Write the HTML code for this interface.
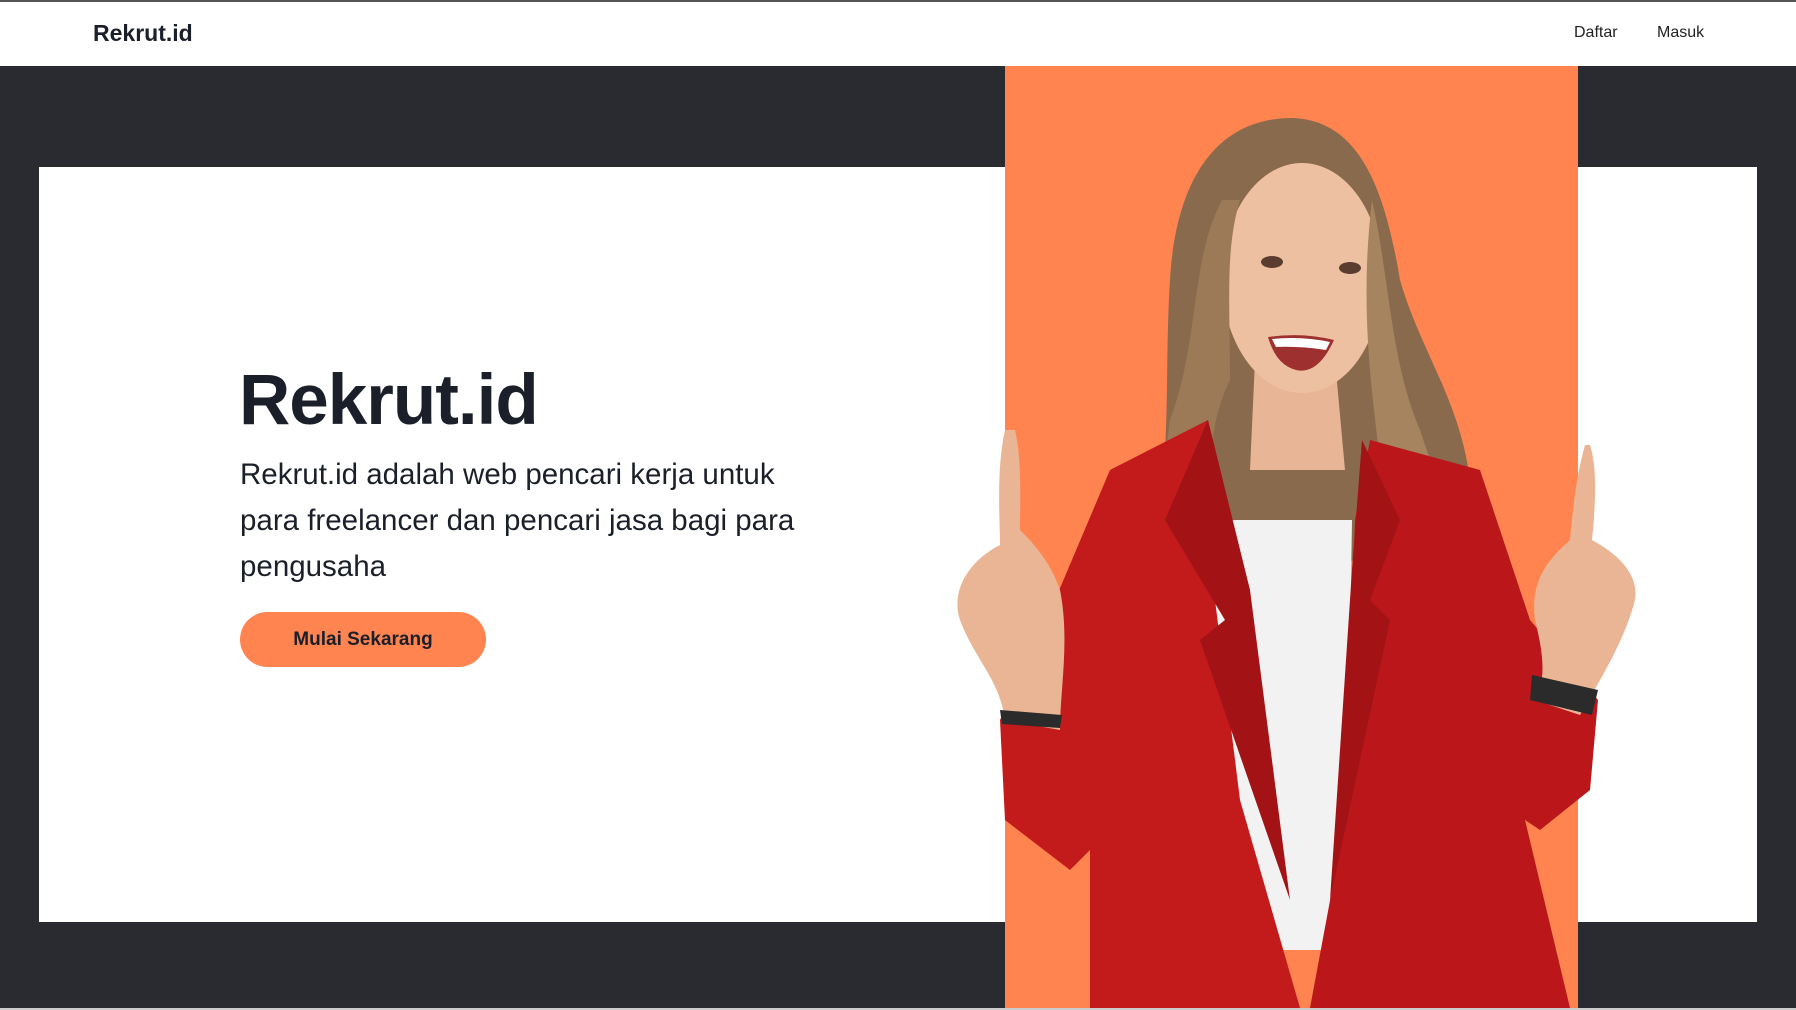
<!DOCTYPE html>
<html><head><meta charset="utf-8"><style>
*{margin:0;padding:0;box-sizing:border-box}
body{width:1796px;height:1010px;overflow:hidden;background:#2a2a31;font-family:"Liberation Sans",sans-serif;position:relative}
.nav{position:absolute;left:0;top:0;width:1796px;height:66px;background:#fff;border-top:2px solid #555}
.logo{position:absolute;left:93px;top:18px;font-size:23px;font-weight:bold;color:#1b1f2a}
.nl{position:absolute;top:22px;font-size:16px;color:#222}
.card{position:absolute;left:39px;top:167px;width:1718px;height:755px;background:#fff}
.orange{position:absolute;left:1005px;top:66px;width:573px;height:942px;background:#ff8450}
h1{position:absolute;left:239px;top:360px;font-size:71px;font-weight:bold;color:#1b1f2a;letter-spacing:-1px}
p{position:absolute;left:240px;top:452px;width:600px;font-size:29.5px;line-height:46px;color:#1b1f2a}
.btn{position:absolute;left:240px;top:612px;width:246px;height:55px;border-radius:28px;background:#ff8450;color:#1b1f2a;font-weight:bold;font-size:19px;text-align:center;line-height:55px}
svg{position:absolute;left:0;top:0}
.bot{position:absolute;left:0;top:1008px;width:1796px;height:2px;background:#ccc}
</style></head><body>
<div class="nav"><div class="logo">Rekrut.id</div><div class="nl" style="left:1574px">Daftar</div><div class="nl" style="left:1657px">Masuk</div></div>
<div class="card"></div>
<div class="orange"></div>
<svg width="1796" height="1010" viewBox="0 0 1796 1010">
<path d="M1292 118 C1210 118 1175 190 1170 280 C1165 360 1170 420 1160 520 C1185 560 1220 580 1250 570 L1360 560 C1420 600 1480 680 1495 700 C1510 650 1480 560 1470 480 C1460 400 1420 350 1400 280 C1385 190 1360 120 1292 118Z" fill="#8a6a4c"/>
<path d="M1255 360 L1335 360 L1345 470 L1250 470Z" fill="#e8b596"/>
<ellipse cx="1302" cy="278" rx="80" ry="115" fill="#eec0a2"/>
<ellipse cx="1272" cy="262" rx="11" ry="6" fill="#5a3d2e"/><ellipse cx="1350" cy="268" rx="11" ry="6" fill="#5a3d2e"/>
<path d="M1268 337 Q1302 332 1334 340 Q1318 375 1296 370 Q1276 365 1268 337Z" fill="#9e3030"/>
<path d="M1272 339 Q1302 336 1330 342 L1326 350 Q1300 346 1276 347Z" fill="#fff"/>
<path d="M1222 200 C1190 260 1200 340 1170 420 C1160 480 1180 560 1190 620 L1215 600 C1210 520 1200 440 1230 380 C1230 300 1225 250 1240 200Z" fill="#9c7a58"/>
<path d="M1372 200 C1390 280 1390 360 1420 430 C1450 520 1480 600 1470 690 L1440 670 C1430 600 1400 520 1380 460 C1370 380 1360 300 1372 200Z" fill="#a5845f"/>
<path d="M1205 520 L1352 520 L1345 950 L1210 950Z" fill="#f2f2f2"/>
<path d="M1208 420 L1110 470 L1055 600 L1000 720 L1005 820 L1070 870 L1090 850 L1090 1008 L1300 1008 L1240 800 L1205 520 L1210 440Z" fill="#c31a1c"/>
<path d="M1370 440 L1480 470 L1530 620 L1598 700 L1590 790 L1540 830 L1525 820 L1570 1008 L1310 1008 L1345 820 L1355 520Z" fill="#bb1619"/>
<path d="M1208 420 L1165 520 L1225 620 L1200 640 L1290 900 L1250 590Z" fill="#a31215"/>
<path d="M1362 440 L1400 520 L1370 600 L1390 620 L1330 900 L1352 570Z" fill="#a31215"/>
<path d="M1005 430 C996 470 1000 520 1000 545 C970 560 950 590 960 620 C975 660 1000 680 1005 720 L1060 730 C1060 690 1070 640 1060 590 C1050 560 1030 540 1020 530 C1020 500 1022 460 1015 430Z" fill="#eab595"/>
<path d="M1585 445 C1575 480 1572 520 1570 540 C1548 560 1530 580 1535 620 C1545 660 1545 680 1535 700 L1580 715 C1600 680 1625 640 1635 600 C1640 570 1610 550 1592 540 C1595 510 1598 470 1590 445Z" fill="#eab595"/>
<path d="M1532 675 L1598 690 L1592 715 L1530 700Z" fill="#2b2b2b"/>
<path d="M1000 710 L1062 715 L1060 728 L1002 724Z" fill="#2b2b2b"/>
</svg>
<h1>Rekrut.id</h1>
<p>Rekrut.id adalah web pencari kerja untuk para freelancer dan pencari jasa bagi para pengusaha</p>
<div class="btn">Mulai Sekarang</div>
<div class="bot"></div>
</body></html>
